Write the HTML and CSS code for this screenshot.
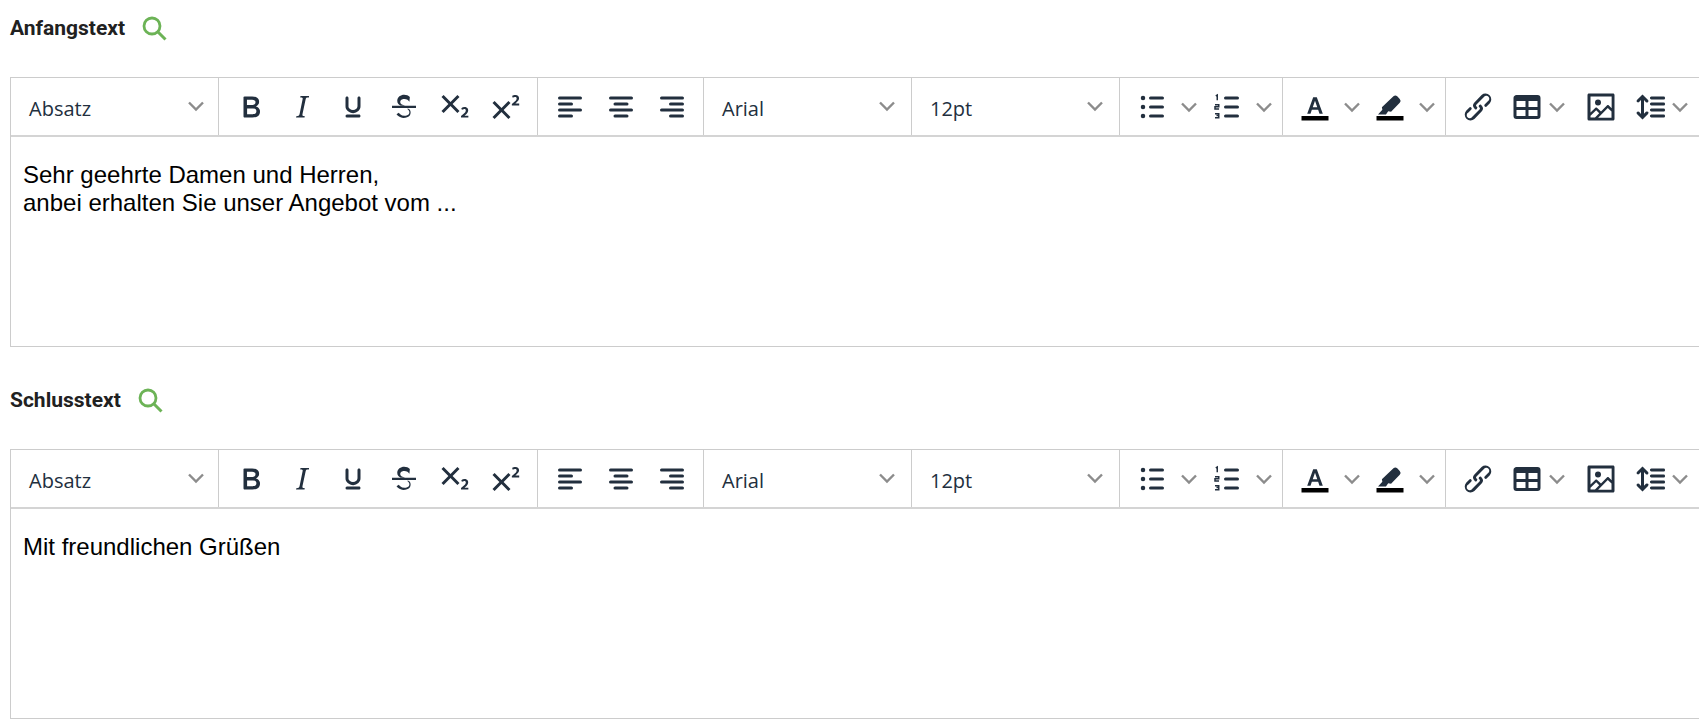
FILE: index.html
```html
<!DOCTYPE html>
<html lang="de">
<head>
  <meta charset="UTF-8">
  <title>Textbausteine</title>
  <link rel="stylesheet" href="styles.css">
</head>
<body>
  <svg class="sprite" xmlns="http://www.w3.org/2000/svg">
    <symbol id="i-search" viewBox="0 0 26 26"><circle cx="11" cy="11" r="8" fill="none" stroke="currentColor" stroke-width="2.8"/><path d="M17 17l7.500 7.500" fill="none" stroke="currentColor" stroke-width="3"/></symbol>
    <symbol id="i-chevron" viewBox="0 0 16 16"><path d="M1 4.500l7 7 7-7" fill="none" stroke="currentColor" stroke-width="2.400"/></symbol>
    <symbol id="i-bold" viewBox="0 0 24 24"><path d="M7.800 19c-.3 0-.5 0-.6-.2l-.2-.5V5.700c0-.2 0-.4.2-.5l.6-.2h5c1.500 0 2.700.3 3.500 1 .7.6 1.100 1.400 1.100 2.500a3 3 0 0 1-.6 1.900c-.4.6-1 1-1.600 1.200.4.1.9.3 1.300.6s.8.7 1 1.200c.4.4.5 1 .5 1.600 0 1.300-.4 2.300-1.300 3-.8.7-2.100 1-3.800 1H7.800zm5-8.300c.6 0 1.200-.1 1.600-.5.4-.3.6-.7.6-1.300 0-1.100-.8-1.700-2.300-1.700H9.300v3.500h3.400zm.5 6c.7 0 1.300-.1 1.700-.4.4-.4.6-.9.6-1.500s-.2-1-.7-1.400c-.4-.3-1-.4-2-.4H9.400v3.800h4z"/></symbol>
    <symbol id="i-italic" viewBox="0 0 24 24"><path d="M16.700 4.700l-.1.9h-.3c-.6 0-1 0-1.400.3-.3.3-.4.6-.5 1.100l-2.100 9.800v.6c0 .5.4.8 1.400.8h.2l-.2.8H8l.2-.8h.2c1.100 0 1.800-.5 2-1.500l2-9.800.1-.5c0-.6-.4-.8-1.400-.8h-.3l.2-.9h5.800z"/></symbol>
    <symbol id="i-underline" viewBox="0 0 24 24"><path d="M16 5c.6 0 1 .4 1 1v5.500a4 4 0 0 1-.4 1.800l-1 1.400a5.300 5.300 0 0 1-5.500 1 5 5 0 0 1-1.600-1c-.5-.4-.8-.9-1.100-1.400a4 4 0 0 1-.4-1.800V6c0-.6.4-1 1-1s1 .4 1 1v5.500c0 .3 0 .6.2 1l.6.7a3.300 3.300 0 0 0 2.200.8 3.400 3.400 0 0 0 2.200-.8c.3-.2.4-.5.6-.8l.2-.9V6c0-.6.4-1 1-1zM8 17h8c.6 0 1 .4 1 1s-.4 1-1 1H8a1 1 0 0 1 0-2z"/></symbol>
    <symbol id="i-strike" viewBox="0 0 24 24"><path d="M15.600 8.500c-.5-.7-1-1.100-1.300-1.300-.6-.4-1.300-.6-2-.6-2.700 0-2.800 1.700-2.800 2.100 0 1.600 1.800 2 3.200 2.300h-3c-1.300-.6-2.200-1.600-2.200-3.200 0-2.500 2.300-4 4.600-4 1.600 0 2.800.6 3.800 1.500l-.3 3.200zM4 11.200h16v1.400H4zM15 13.200c1.200.7 1.400 1.700 1.400 2.500 0 1.400-.7 3.600-4.900 3.600A6.200 6.200 0 0 1 7 16.900l1.500-1.100c.4.6 1.600 2 3.700 2 1.600 0 2.500-.4 3-1 .3-.4.4-.9.4-1.200 0-.6-.2-1.500-1.600-2.400z"/></symbol>
    <symbol id="i-sub" viewBox="0 0 24 24"><path d="M10.400 10l4.600 4.600-1.400 1.400L9 11.400 4.400 16 3 14.600 7.600 10 3 5.400 4.400 4 9 8.600 13.600 4 15 5.400 10.400 10zM21 19h-5v-1l1-.8 1.700-1.600c.3-.4.5-.8.5-1.200 0-.3 0-.6-.2-.7-.2-.2-.5-.3-.9-.3a2 2 0 0 0-.8.2l-.7.3-.4-1.100 1-.6 1.200-.2c.8 0 1.400.3 1.800.7.4.4.6.9.6 1.500s-.2 1.100-.5 1.600a8 8 0 0 1-1.400 1.500l-.6.6h2.600V19z"/></symbol>
    <symbol id="i-sup" viewBox="0 0 24 24"><path d="M15 9.400L10.400 14l4.600 4.600-1.400 1.400L9 15.400 4.400 20 3 18.600 7.600 14 3 9.400 4.400 8 9 12.600 13.600 8 15 9.400zm5.900 1.600h-5v-1l1-.8 1.700-1.600c.3-.5.5-.9.5-1.300 0-.3 0-.5-.2-.7-.2-.2-.5-.3-.9-.3l-.8.2-.7.4-.4-1.200c.2-.2.5-.4 1-.5.3-.2.8-.2 1.200-.2.8 0 1.400.2 1.800.6.4.4.6 1 .6 1.600 0 .5-.2 1-.5 1.500l-1.400 1.400-.6.6h2.600V11z"/></symbol>
    <symbol id="i-align-left" viewBox="0 0 24 24"><rect x="4" y="5" width="16" height="2" rx="1"/><rect x="4" y="9" width="10" height="2" rx="1"/><rect x="4" y="13" width="16" height="2" rx="1"/><rect x="4" y="17" width="10" height="2" rx="1"/></symbol>
    <symbol id="i-align-center" viewBox="0 0 24 24"><rect x="4" y="5" width="16" height="2" rx="1"/><rect x="7" y="9" width="10" height="2" rx="1"/><rect x="4" y="13" width="16" height="2" rx="1"/><rect x="7" y="17" width="10" height="2" rx="1"/></symbol>
    <symbol id="i-align-right" viewBox="0 0 24 24"><rect x="4" y="5" width="16" height="2" rx="1"/><rect x="10" y="9" width="10" height="2" rx="1"/><rect x="4" y="13" width="16" height="2" rx="1"/><rect x="10" y="17" width="10" height="2" rx="1"/></symbol>
    <symbol id="i-bullets" viewBox="0 0 24 24"><circle cx="6" cy="6" r="1.500"/><circle cx="6" cy="12" r="1.500"/><circle cx="6" cy="18" r="1.500"/><rect x="10" y="5" width="10" height="2" rx="1"/><rect x="10" y="11" width="10" height="2" rx="1"/><rect x="10" y="17" width="10" height="2" rx="1"/></symbol>
    <symbol id="i-numbers" viewBox="0 0 24 24"><rect x="10" y="5" width="10" height="2" rx="1"/><rect x="10" y="11" width="10" height="2" rx="1"/><rect x="10" y="17" width="10" height="2" rx="1"/><path d="M5.500 7.500V4l-1 .6M4 10.500h2.500v1.300H4v1.500h2.700M4 16.500h2.500v1.200H5h1.500v1.500H4" fill="none" stroke="currentColor" stroke-width="1"/></symbol>
    <symbol id="i-text-color" viewBox="0 0 24 24"><path d="M10.800 5.500h2.400l4 11h-2.200l-.9-2.600h-4.200l-.9 2.600H6.800l4-11zm-.3 6.600h3L12 7.800l-1.500 4.300z" fill-rule="evenodd"/><path d="M3 18h18v3H3z" fill="#000"/></symbol>
    <symbol id="i-marker" viewBox="0 0 24 24"><path d="M14.300 4.900a1.800 1.800 0 0 1 2.500 0l1.700 1.700a1.800 1.800 0 0 1 0 2.500l-5.800 6-1.900-.2-1.500 2.100H4l2.900-3.100-.3-1.700z"/><path d="M3 18h18v3H3z" fill="#000"/></symbol>
    <symbol id="i-link" viewBox="0 0 24 24"><path d="M6.200 12.300a1 1 0 0 1 1.400 1.400l-2 2a2 2 0 1 0 2.600 2.800l4.800-4.800a1 1 0 0 0 0-1.400 1 1 0 1 1 1.400-1.300 2.900 2.900 0 0 1 0 4L9.600 20a3.900 3.900 0 0 1-5.500-5.500l2-2zm11.600-.6a1 1 0 0 1-1.400-1.400l2-2a2 2 0 1 0-2.600-2.800L11 10.300a1 1 0 0 0 0 1.400A1 1 0 1 1 9.600 13a2.900 2.900 0 0 1 0-4L14.400 4a3.900 3.900 0 0 1 5.500 5.500l-2 2z"/></symbol>
    <symbol id="i-table" viewBox="0 0 24 24"><path d="M19 4a2 2 0 0 1 2 2v12a2 2 0 0 1-2 2H5a2 2 0 0 1-2-2V6c0-1.100.9-2 2-2h14zM5 14v4h6v-4H5zm14 0h-6v4h6v-4zm0-6h-6v4h6V8zM5 12h6V8H5v4z"/></symbol>
    <symbol id="i-image" viewBox="0 0 24 24"><path d="M5 15.700l3.300-3.200c.3-.3.7-.3 1 0L12 15l4.100-4.100c.3-.4.8-.4 1 0l2 1.900V5H5v10.700zM5 18v1h3l2.800-2.900-2-2L5 17.900zm14-3l-2.500-2.400-6.400 6.500H19v-4zM4 3h16c.6 0 1 .4 1 1v16c0 .6-.4 1-1 1H4a1 1 0 0 1-1-1V4c0-.6.4-1 1-1zm6 8a2 2 0 1 0 0-4 2 2 0 0 0 0 4z"/></symbol>
    <symbol id="i-line-height" viewBox="0 0 24 24"><path d="M21 5a1 1 0 0 1 .1 2H13a1 1 0 0 1-.1-2H21zm0 4a1 1 0 0 1 .1 2H13a1 1 0 0 1-.1-2H21zm0 4a1 1 0 0 1 .1 2H13a1 1 0 0 1-.1-2H21zm0 4a1 1 0 0 1 .1 2H13a1 1 0 0 1-.1-2H21zM7 3.600l3.700 3.700a1 1 0 0 1-1.300 1.500h-.1L8 7.300v9.200l1.300-1.300a1 1 0 0 1 1.300 0h.1c.4.4.4 1 0 1.300v.1L7 20.400l-3.700-3.700a1 1 0 0 1 1.300-1.500h.1L6 16.700V7.400L4.700 8.700a1 1 0 0 1-1.300 0h-.1a1 1 0 0 1 0-1.300v-.1L7 3.600z"/></symbol>
  </svg>

  <section class="block">
    <div class="block-title">
      <span>Anfangstext</span>
      <svg class="search-icon"><use href="#i-search"></use></svg>
    </div>
    <div class="editor">
      <div class="toolbar">
        <div class="tb-select tb-select-format"><span>Absatz</span><svg class="chevron"><use href="#i-chevron"></use></svg></div>
        <div class="tb-group">
          <button class="tb-btn"><svg class="icon"><use href="#i-bold"></use></svg></button>
          <button class="tb-btn"><svg class="icon"><use href="#i-italic"></use></svg></button>
          <button class="tb-btn"><svg class="icon"><use href="#i-underline"></use></svg></button>
          <button class="tb-btn"><svg class="icon"><use href="#i-strike"></use></svg></button>
          <button class="tb-btn"><svg class="icon"><use href="#i-sub"></use></svg></button>
          <button class="tb-btn"><svg class="icon"><use href="#i-sup"></use></svg></button>
        </div>
        <div class="tb-group">
          <button class="tb-btn"><svg class="icon"><use href="#i-align-left"></use></svg></button>
          <button class="tb-btn"><svg class="icon"><use href="#i-align-center"></use></svg></button>
          <button class="tb-btn"><svg class="icon"><use href="#i-align-right"></use></svg></button>
        </div>
        <div class="tb-select"><span>Arial</span><svg class="chevron"><use href="#i-chevron"></use></svg></div>
        <div class="tb-select"><span>12pt</span><svg class="chevron"><use href="#i-chevron"></use></svg></div>
        <div class="tb-group">
          <button class="tb-btn"><svg class="icon"><use href="#i-bullets"></use></svg></button><span class="tb-arrow"><svg class="chevron"><use href="#i-chevron"></use></svg></span>
          <button class="tb-btn"><svg class="icon"><use href="#i-numbers"></use></svg></button><span class="tb-arrow"><svg class="chevron"><use href="#i-chevron"></use></svg></span>
        </div>
        <div class="tb-group">
          <button class="tb-btn"><svg class="icon"><use href="#i-text-color"></use></svg></button><span class="tb-arrow"><svg class="chevron"><use href="#i-chevron"></use></svg></span>
          <button class="tb-btn"><svg class="icon"><use href="#i-marker"></use></svg></button><span class="tb-arrow"><svg class="chevron"><use href="#i-chevron"></use></svg></span>
        </div>
        <div class="tb-group tb-group-last">
          <button class="tb-btn"><svg class="icon"><use href="#i-link"></use></svg></button>
          <button class="tb-btn tb-btn-tight"><svg class="icon"><use href="#i-table"></use></svg></button><span class="tb-arrow"><svg class="chevron"><use href="#i-chevron"></use></svg></span>
          <button class="tb-btn"><svg class="icon"><use href="#i-image"></use></svg></button>
          <button class="tb-btn tb-btn-tight"><svg class="icon"><use href="#i-line-height"></use></svg></button><span class="tb-arrow"><svg class="chevron"><use href="#i-chevron"></use></svg></span>
        </div>
      </div>
      <div class="editor-body">
        <p>Sehr geehrte Damen und Herren,<br>anbei erhalten Sie unser Angebot vom ...</p>
      </div>
    </div>
  </section>

  <section class="block block-second">
    <div class="block-title">
      <span>Schlusstext</span>
      <svg class="search-icon"><use href="#i-search"></use></svg>
    </div>
    <div class="editor">
      <div class="toolbar">
        <div class="tb-select tb-select-format"><span>Absatz</span><svg class="chevron"><use href="#i-chevron"></use></svg></div>
        <div class="tb-group">
          <button class="tb-btn"><svg class="icon"><use href="#i-bold"></use></svg></button>
          <button class="tb-btn"><svg class="icon"><use href="#i-italic"></use></svg></button>
          <button class="tb-btn"><svg class="icon"><use href="#i-underline"></use></svg></button>
          <button class="tb-btn"><svg class="icon"><use href="#i-strike"></use></svg></button>
          <button class="tb-btn"><svg class="icon"><use href="#i-sub"></use></svg></button>
          <button class="tb-btn"><svg class="icon"><use href="#i-sup"></use></svg></button>
        </div>
        <div class="tb-group">
          <button class="tb-btn"><svg class="icon"><use href="#i-align-left"></use></svg></button>
          <button class="tb-btn"><svg class="icon"><use href="#i-align-center"></use></svg></button>
          <button class="tb-btn"><svg class="icon"><use href="#i-align-right"></use></svg></button>
        </div>
        <div class="tb-select"><span>Arial</span><svg class="chevron"><use href="#i-chevron"></use></svg></div>
        <div class="tb-select"><span>12pt</span><svg class="chevron"><use href="#i-chevron"></use></svg></div>
        <div class="tb-group">
          <button class="tb-btn"><svg class="icon"><use href="#i-bullets"></use></svg></button><span class="tb-arrow"><svg class="chevron"><use href="#i-chevron"></use></svg></span>
          <button class="tb-btn"><svg class="icon"><use href="#i-numbers"></use></svg></button><span class="tb-arrow"><svg class="chevron"><use href="#i-chevron"></use></svg></span>
        </div>
        <div class="tb-group">
          <button class="tb-btn"><svg class="icon"><use href="#i-text-color"></use></svg></button><span class="tb-arrow"><svg class="chevron"><use href="#i-chevron"></use></svg></span>
          <button class="tb-btn"><svg class="icon"><use href="#i-marker"></use></svg></button><span class="tb-arrow"><svg class="chevron"><use href="#i-chevron"></use></svg></span>
        </div>
        <div class="tb-group tb-group-last">
          <button class="tb-btn"><svg class="icon"><use href="#i-link"></use></svg></button>
          <button class="tb-btn tb-btn-tight"><svg class="icon"><use href="#i-table"></use></svg></button><span class="tb-arrow"><svg class="chevron"><use href="#i-chevron"></use></svg></span>
          <button class="tb-btn"><svg class="icon"><use href="#i-image"></use></svg></button>
          <button class="tb-btn tb-btn-tight"><svg class="icon"><use href="#i-line-height"></use></svg></button><span class="tb-arrow"><svg class="chevron"><use href="#i-chevron"></use></svg></span>
        </div>
      </div>
      <div class="editor-body">
        <p>Mit freundlichen Grüßen</p>
      </div>
    </div>
  </section>
</body>
</html>
```

FILE: styles.css
```css
html, body {
  overflow: hidden;
}
body {
  margin: 0;
  height: 725px;
  background: #fff;
  font-family: "Open Sans", Arial, sans-serif;
  color: #222f3e;
}
.sprite {
  display: none;
}
.block {
  padding-left: 10px;
}
.block-second {
  margin-top: 25px;
}
.block-title {
  display: flex;
  align-items: center;
  gap: 16px;
  height: 56px;
  margin-bottom: 21px;
  font-family: Roboto, Arial, sans-serif;
  font-size: 21px;
  font-weight: 700;
  color: #212121;
}
.search-icon {
  width: 26px;
  height: 26px;
  color: #6cb356;
}
.editor {
  border: 1px solid #ccc;
  border-right: none;
}
.toolbar {
  display: flex;
  height: 59px;
  border-bottom: 2px solid #d4d4d4;
  box-sizing: border-box;
}
.toolbar > * {
  flex: none;
}
.tb-select {
  display: flex;
  align-items: center;
  justify-content: space-between;
  box-sizing: border-box;
  width: 208px;
  padding: 0 16px 0 18px;
  border-right: 1px solid #ccc;
  font-size: 20px;
}
.tb-select span {
  margin-top: 4px;
}
.tb-select .chevron {
  margin-top: -2px;
}
.tb-select-format {
  padding-right: 14px;
}
.tb-group {
  display: flex;
  align-items: center;
  padding: 0 6px;
  border-right: 1px solid #ccc;
}
.tb-group-last {
  border-right: none;
}
.tb-btn {
  display: flex;
  align-items: center;
  justify-content: center;
  flex: none;
  width: 51px;
  height: 48px;
  padding: 0;
  border: none;
  background: none;
  color: #222f3e;
}
.tb-btn-tight {
  justify-content: flex-start;
  width: 42px;
  padding-left: 6px;
}
.tb-btn-tight + .tb-arrow {
  margin-right: 6px;
}
.icon {
  flex: none;
  width: 36px;
  height: 36px;
  fill: currentColor;
}
.tb-arrow {
  display: flex;
  align-items: center;
  justify-content: center;
  flex: none;
  width: 24px;
  height: 48px;
}
.chevron {
  flex: none;
  width: 16px;
  height: 16px;
  color: #8c8c8c;
}
.editor-body {
  box-sizing: border-box;
  height: 209px;
  padding: 24px 12px;
  font-family: "Liberation Sans", Arial, sans-serif;
  font-size: 24px;
  line-height: 28px;
  color: #000;
}
.editor-body p {
  margin: 0;
}
```
